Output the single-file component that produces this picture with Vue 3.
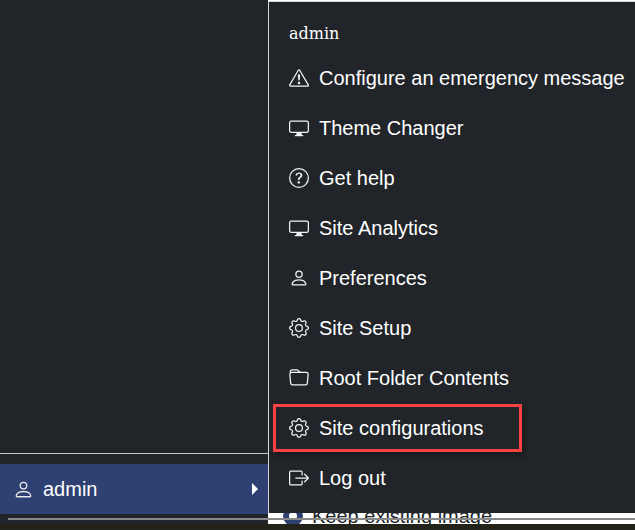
<script setup>
const icons = {
  warn: ['M7.938 2.016A.13.13 0 0 1 8.002 2a.13.13 0 0 1 .063.016.146.146 0 0 1 .054.057l6.857 11.667c.036.06.035.124.002.183a.163.163 0 0 1-.054.06.116.116 0 0 1-.066.017H1.146a.115.115 0 0 1-.066-.017.163.163 0 0 1-.054-.06.176.176 0 0 1 .002-.183L7.884 2.073a.147.147 0 0 1 .054-.057zm1.044-.45a1.13 1.13 0 0 0-1.96 0L.165 13.233c-.457.778.091 1.767.98 1.767h13.713c.889 0 1.438-.99.98-1.767L8.982 1.566z', 'M7.002 12a1 1 0 1 1 2 0 1 1 0 0 1-2 0zM7.1 5.995a.905.905 0 1 1 1.8 0l-.35 3.507a.552.552 0 0 1-1.1 0L7.1 5.995z'],
  display: ['M0 4s0-2 2-2h12s2 0 2 2v6s0 2-2 2h-4c0 .667.083 1.167.25 1.5H11a.5.5 0 0 1 0 1H5a.5.5 0 0 1 0-1h.75c.167-.333.25-.833.25-1.5H2s-2 0-2-2V4zm1.398-.855a.758.758 0 0 0-.254.302A1.46 1.46 0 0 0 1 4.01V10c0 .325.078.502.145.602.07.105.17.188.302.254a1.464 1.464 0 0 0 .538.143L2.01 11H14c.325 0 .502-.078.602-.145a.758.758 0 0 0 .254-.302 1.464 1.464 0 0 0 .143-.538L15 9.99V4c0-.325-.078-.502-.145-.602a.757.757 0 0 0-.302-.254A1.46 1.46 0 0 0 13.99 3H2c-.325 0-.502.078-.602.145z'],
  help: ['M8 15A7 7 0 1 1 8 1a7 7 0 0 1 0 14zm0 1A8 8 0 1 0 8 0a8 8 0 0 0 0 16z', 'M5.255 5.786a.237.237 0 0 0 .241.247h.825c.138 0 .248-.113.266-.25.09-.656.54-1.134 1.342-1.134.686 0 1.314.343 1.314 1.168 0 .635-.374.927-.965 1.371-.673.489-1.206 1.06-1.168 1.987l.003.217a.25.25 0 0 0 .25.246h.811a.25.25 0 0 0 .25-.25v-.105c0-.718.273-.927 1.01-1.486.609-.463 1.244-.977 1.244-2.056 0-1.511-1.276-2.241-2.673-2.241-1.267 0-2.655.59-2.75 2.286zm1.557 5.763c0 .533.425.927 1.01.927.609 0 1.028-.394 1.028-.927 0-.552-.42-.94-1.029-.94-.584 0-1.009.388-1.009.94z'],
  person: ['M8 8a3 3 0 1 0 0-6 3 3 0 0 0 0 6zm2-3a2 2 0 1 1-4 0 2 2 0 0 1 4 0zm4 8c0 1-1 1-1 1H3s-1 0-1-1 1-4 6-4 6 3 6 4zm-1-.004c-.001-.246-.154-.986-.832-1.664C11.516 10.68 10.289 10 8 10c-2.29 0-3.516.68-4.168 1.332-.678.678-.83 1.418-.832 1.664h10z'],
  gear: ['M8 4.754a3.246 3.246 0 1 0 0 6.492 3.246 3.246 0 0 0 0-6.492zM5.754 8a2.246 2.246 0 1 1 4.492 0 2.246 2.246 0 0 1-4.492 0z', 'M9.796 1.343c-.527-1.79-3.065-1.79-3.592 0l-.094.319a.873.873 0 0 1-1.255.52l-.292-.16c-1.64-.892-3.433.902-2.54 2.541l.159.292a.873.873 0 0 1-.52 1.255l-.319.094c-1.79.527-1.79 3.065 0 3.592l.319.094a.873.873 0 0 1 .52 1.255l-.16.292c-.892 1.64.901 3.434 2.541 2.54l.292-.159a.873.873 0 0 1 1.255.52l.094.319c.527 1.79 3.065 1.79 3.592 0l.094-.319a.873.873 0 0 1 1.255-.52l.292.16c1.64.893 3.434-.902 2.54-2.541l-.159-.292a.873.873 0 0 1 .52-1.255l.319-.094c1.79-.527 1.79-3.065 0-3.592l-.319-.094a.873.873 0 0 1-.52-1.255l.16-.292c.893-1.64-.902-3.433-2.541-2.54l-.292.159a.873.873 0 0 1-1.255-.52l-.094-.319zm-2.633.283c.246-.835 1.428-.835 1.674 0l.094.319a1.873 1.873 0 0 0 2.693 1.115l.291-.16c.764-.415 1.6.42 1.184 1.185l-.159.292a1.873 1.873 0 0 0 1.116 2.692l.318.094c.835.246.835 1.428 0 1.674l-.319.094a1.873 1.873 0 0 0-1.115 2.693l.16.291c.415.764-.42 1.6-1.185 1.184l-.291-.159a1.873 1.873 0 0 0-2.693 1.116l-.094.318c-.246.835-1.428.835-1.674 0l-.094-.319a1.873 1.873 0 0 0-2.692-1.115l-.292.16c-.764.415-1.6-.42-1.184-1.185l.159-.291A1.873 1.873 0 0 0 1.945 8.93l-.319-.094c-.835-.246-.835-1.428 0-1.674l.319-.094A1.873 1.873 0 0 0 3.06 4.377l-.16-.292c-.415-.764.42-1.6 1.185-1.184l.292.159a1.873 1.873 0 0 0 2.692-1.115l.094-.319z'],
  folder: ['M.54 3.87.5 3a2 2 0 0 1 2-2h3.672a2 2 0 0 1 1.414.586l.828.828A2 2 0 0 0 9.828 3h3.982a2 2 0 0 1 1.992 2.181l-.637 7A2 2 0 0 1 13.174 14H2.826a2 2 0 0 1-1.991-1.819l-.637-7a1.99 1.99 0 0 1 .342-1.31zM2.19 4a1 1 0 0 0-.996 1.09l.637 7a1 1 0 0 0 .995.91h10.348a1 1 0 0 0 .995-.91l.637-7A1 1 0 0 0 13.81 4H2.19zm4.69-1.707A1 1 0 0 0 6.172 2H2.5a1 1 0 0 0-1 .981l.006.139C1.72 3.042 1.95 3 2.19 3h5.396l-.707-.707z'],
  logout: ['M10 12.5a.5.5 0 0 1-.5.5h-8a.5.5 0 0 1-.5-.5v-9a.5.5 0 0 1 .5-.5h8a.5.5 0 0 1 .5.5v2a.5.5 0 0 0 1 0v-2A1.5 1.5 0 0 0 9.5 2h-8A1.5 1.5 0 0 0 0 3.5v9A1.5 1.5 0 0 0 1.5 14h8a1.5 1.5 0 0 0 1.5-1.5v-2a.5.5 0 0 0-1 0v2z', 'M15.854 8.354a.5.5 0 0 0 0-.708l-3-3a.5.5 0 0 0-.708.708L14.293 7.5H5.5a.5.5 0 0 0 0 1h8.793l-2.147 2.146a.5.5 0 0 0 .708.708l3-3z'],
}
const items = [
  { label: 'Configure an emergency message', icon: 'warn' },
  { label: 'Theme Changer', icon: 'display' },
  { label: 'Get help', icon: 'help' },
  { label: 'Site Analytics', icon: 'display' },
  { label: 'Preferences', icon: 'person' },
  { label: 'Site Setup', icon: 'gear' },
  { label: 'Root Folder Contents', icon: 'folder' },
  { label: 'Site configurations', icon: 'gear', marked: true },
  { label: 'Log out', icon: 'logout' },
]
</script>

<template>
  <div class="page">
    <div class="top">
      <aside class="sidebar">
        <div class="spacer"></div>
        <div class="rule"></div>
        <div class="user">
          <svg class="user-icon" viewBox="0 0 16 16" fill="currentColor"><path v-for="d in icons.person" :key="d" :d="d" /></svg>
          <span class="user-name">admin</span>
          <span class="caret"></span>
        </div>
        <div class="side-end"></div>
      </aside>
      <main class="content">
        <div class="keep">
          <span class="radio"></span>
          <span class="keep-text">Keep existing image</span>
        </div>
      </main>
      <div class="scrollbar"></div>
      <nav class="menu">
        <div class="menu-title">admin</div>
        <a v-for="item in items" :key="item.label" class="item" :class="{ marked: item.marked }">
          <svg class="icon" viewBox="0 0 16 16" fill="currentColor"><path v-for="d in icons[item.icon]" :key="d" :d="d" /></svg>
          <span>{{ item.label }}</span>
        </a>
      </nav>
    </div>
    <div class="bottom"></div>
  </div>
</template>

<style scoped>
.page {
  width: 635px;
  height: 530px;
  display: flex;
  flex-direction: column;
  overflow: hidden;
  font-family: "Liberation Sans", Arial, sans-serif;
}
.top {
  position: relative;
  height: 524px;
  display: flex;
  background: #fff;
}
.sidebar {
  width: 268px;
  display: flex;
  flex-direction: column;
  background: #212529;
  color: #fff;
}
.spacer { height: 453px; }
.rule { height: 1px; background: #c4c6c8; }
.user {
  margin-top: 10px;
  height: 50px;
  padding: 0 10px 0 13px;
  display: flex;
  align-items: center;
  background: #2f4172;
}
.user-icon { width: 21px; height: 21px; color: #e8e8ec; }
.user-name { margin-left: 9px; font-size: 20px; flex: 1; }
.caret {
  width: 0;
  height: 0;
  border-left: 6px solid #fff;
  border-top: 6px solid transparent;
  border-bottom: 6px solid transparent;
}
.side-end { flex: 1; }
.content {
  flex: 1;
  padding: 504px 0 0 15px;
  overflow: hidden;
}
.keep { display: flex; align-items: center; gap: 9px; }
.radio {
  width: 20px;
  height: 20px;
  box-sizing: border-box;
  border-radius: 50%;
  border: 6px solid #2f4172;
  background: #fff;
}
.keep-text {
  font-size: 20px;
  line-height: 24px;
  color: #212529;
}
.scrollbar {
  position: absolute;
  left: 8px;
  right: 0;
  top: 518px;
  height: 2px;
  background: #888;
}
.menu {
  position: absolute;
  left: 268px;
  top: 1px;
  width: 367px;
  height: 512px;
  box-sizing: border-box;
  border-left: 1px solid #d6d7d8;
  border-top: 1px solid #d6d7d8;
  padding: 15px 0 0 19px;
  display: flex;
  flex-direction: column;
  background: #212529;
  color: #fff;
}
.menu-title {
  height: 36px;
  padding-left: 1px;
  font-family: "DejaVu Serif", serif;
  font-size: 16px;
  line-height: 34px;
}
.item {
  position: relative;
  height: 50px;
  display: flex;
  align-items: center;
  gap: 10px;
  font-size: 20px;
  color: #fff;
  white-space: nowrap;
}
.icon { width: 20px; height: 20px; flex: none; margin-left: 1px; color: #f2f2f2; }
.marked::after {
  content: "";
  position: absolute;
  left: -15px;
  top: 1px;
  width: 249px;
  height: 48px;
  box-sizing: border-box;
  border: 3px solid #f94144;
  box-shadow: 2px 3px 6px rgba(0, 0, 0, 0.35);
}
.bottom { height: 6px; background: #23231a; }
</style>
